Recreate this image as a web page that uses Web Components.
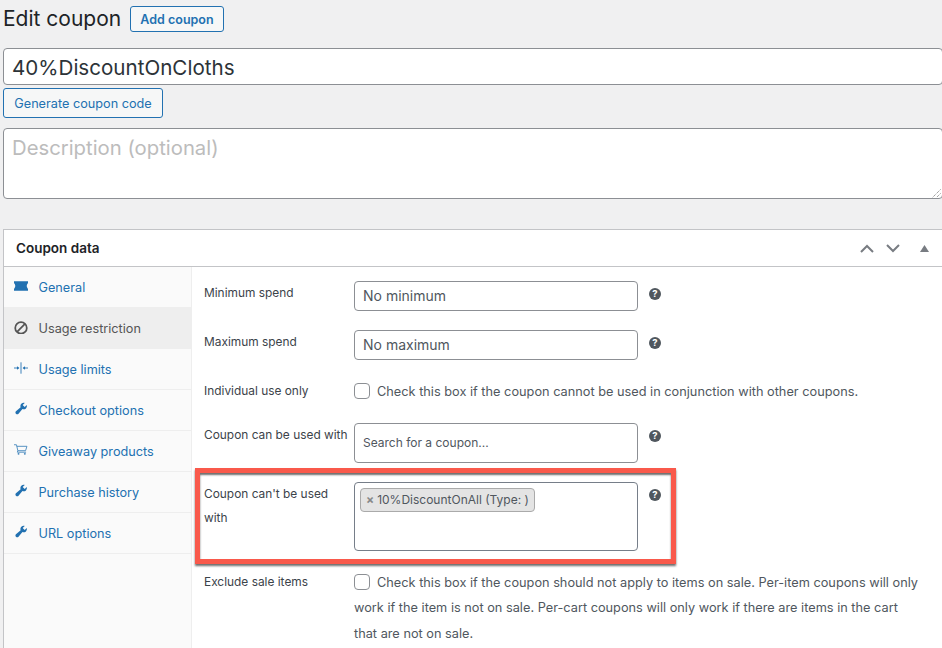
<!DOCTYPE html>
<html>
<head>
<meta charset="utf-8">
<title>Edit coupon</title>
<style>
    html, body {
        margin: 0;
        height: 648px;
        overflow: hidden;
        background: #f0f0f1;
    }
    body {
        padding-left: 3px;
        font-family: Inter, "Liberation Sans", sans-serif;
        font-size: 13px;
        color: #3c434a;
    }
</style>
</head>
<body>
<coupon-head>Edit coupon</coupon-head>
<text-box size="large">40%DiscountOnCloths</text-box>
<wp-button class="gen">Generate coupon code</wp-button>
<text-box size="area" placeholder>Description (optional)</text-box>
<coupon-panel>
    <panel-tab icon="ticket">General</panel-tab>
    <panel-tab icon="ban" active>Usage restriction</panel-tab>
    <panel-tab icon="limits">Usage limits</panel-tab>
    <panel-tab icon="wrench">Checkout options</panel-tab>
    <panel-tab icon="cart">Giveaway products</panel-tab>
    <panel-tab icon="wrench">Purchase history</panel-tab>
    <panel-tab icon="wrench">URL options</panel-tab>

    <form-row slot="rows" style="--top:14px" label="Minimum spend" help>
        <text-box size="field">No minimum</text-box>
    </form-row>
    <form-row slot="rows" style="--top:19px" label="Maximum spend" help>
        <text-box size="field">No maximum</text-box>
    </form-row>
    <form-row slot="rows" style="--top:24px;--label-top:-5px" label="Individual use only">
        <check-text>Check this box if the coupon cannot be used in conjunction with other coupons.</check-text>
    </form-row>
    <form-row slot="rows" style="--top:18px" label="Coupon can be used with" help>
        <text-box size="search">Search for a coupon...</text-box>
    </form-row>
    <form-row slot="rows" class="marked" style="--top:19px" label="Coupon can't be used with" help>
        <chip-box><coupon-chip>10%DiscountOnAll (Type: )</coupon-chip></chip-box>
    </form-row>
    <form-row slot="rows" style="--top:24px;--label-top:-5px" label="Exclude sale items">
        <check-text>Check this box if the coupon should not apply to items on sale. Per-item coupons will only work if the item is not on sale. Per-cart coupons will only work if there are items in the cart that are not on sale.</check-text>
    </form-row>
</coupon-panel>

<script>
const ICONS = {
    ticket: '<path d="M0 2.5h16v2.2Q13 8 16 11.3v2.2H0v-2.2Q3 8 0 4.7z" fill="currentColor"/>',
    ban: '<circle cx="8" cy="9" r="6.6" fill="none" stroke="currentColor" stroke-width="2"/><path d="M3.5 13.5l9-9" stroke="currentColor" stroke-width="2"/>',
    limits: '<path d="M8 1.5v13M0 8h5M11 8h5" stroke="currentColor" stroke-width="1" fill="none"/><path d="M3.4 6L6.2 8l-2.8 2zM12.6 6L9.8 8l2.8 2z" fill="currentColor"/>',
    wrench: '<g transform="translate(0 -.7) scale(.82)"><path fill="currentColor" d="M16.68 9.77c-1.34 1.34-3.3 1.67-4.95.99l-5.41 6.52c-.99.99-2.59.99-3.58 0s-.99-2.59 0-3.57l6.52-5.42c-.68-1.65-.35-3.61.99-4.95 1.28-1.28 3.12-1.62 4.72-1.06l-2.89 2.89 2.82 2.82 2.86-2.87c.53 1.58.18 3.39-1.08 4.67z"/></g>',
    cart: '<g opacity=".85"><path d="M0 2h2.8l1.6 6.8h8.8l1.6-5H3.3M4.4 8.8l-.6 1.7h10" fill="none" stroke="currentColor" stroke-width="1"/><circle cx="5.2" cy="12.4" r="1.1" fill="currentColor"/><circle cx="12.4" cy="12.4" r="1.1" fill="currentColor"/></g>'
};

class CouponHead extends HTMLElement {
    connectedCallback() {
        this.attachShadow({ mode: 'open' });
        this.shadowRoot.innerHTML = `
            <style>
                :host {
                    display: flex;
                    align-items: center;
                    height: 26px;
                    padding: 6px 0 16px;
                    gap: 10px;
                }
                h1 {
                    margin: 0;
                    width: 117px;
                    white-space: nowrap;
                    font-size: 21px;
                    font-weight: 400;
                    color: #1d2327;
                    line-height: 26px;
                }
            </style>
            <h1><slot></slot></h1>
            <wp-button strong>Add coupon</wp-button>
        `;
    }
}

class WpButton extends HTMLElement {
    connectedCallback() {
        this.attachShadow({ mode: 'open' });
        const strong = this.hasAttribute('strong');
        this.shadowRoot.innerHTML = `
            <style>
                :host {
                    display: ${strong ? 'inline-flex' : 'flex'};
                    width: ${strong ? '94px' : '160px'};
                    height: ${strong ? '26px' : '30px'};
                    margin-top: ${strong ? '0' : '3px'};
                    box-sizing: border-box;
                    align-items: center;
                    justify-content: center;
                    border: 1px solid #2271b1;
                    border-radius: 3px;
                    background: #f6f7f7;
                    color: #2271b1;
                    font-size: ${strong ? '12.5px' : '12.7px'};
                    font-weight: ${strong ? '600' : '400'};
                }
            </style>
            <slot></slot>
        `;
    }
}

class TextBox extends HTMLElement {
    connectedCallback() {
        this.attachShadow({ mode: 'open' });
        const size = this.getAttribute('size');
        const sizes = {
            large: 'height:37px;font-size:20.6px;color:#2c3338;padding:2px 0 0 8px;width:940px;',
            area: 'height:71px;margin-top:10px;font-size:20.3px;color:#bcbcbc;padding-left:8px;width:940px;align-items:flex-start;padding-top:6px;',
            field: 'height:30px;font-size:14px;color:#50575e;padding:0 0 2px 8px;width:284px;',
            search: 'height:40px;font-size:12px;color:#50575e;padding:0 0 1px 8px;width:284px;'
        };
        this.shadowRoot.innerHTML = `
            <style>
                :host {
                    display: flex;
                    box-sizing: border-box;
                    position: relative;
                    align-items: center;
                    background: #fff;
                    border: 1px solid #8c8f94;
                    border-radius: 4px;
                    ${sizes[size]}
                }
                svg {
                    position: absolute;
                    right: 1px;
                    bottom: 0;
                }
            </style>
            <slot></slot>
            ${size === 'area' ? '<svg width="9" height="9" viewBox="0 0 9 9"><path d="M8.5 .5l-8 8M8.5 4.5l-4 4" stroke="#777" stroke-width="1" stroke-dasharray="1 1" fill="none"/></svg>' : ''}
        `;
    }
}

class CouponPanel extends HTMLElement {
    connectedCallback() {
        this.attachShadow({ mode: 'open' });
        this.shadowRoot.innerHTML = `
            <style>
                :host {
                    display: block;
                    width: 950px;
                    margin-top: 30px;
                    box-sizing: border-box;
                    background: #fff;
                    border: 1px solid #c3c4c7;
                }
                header {
                    display: flex;
                    align-items: center;
                    height: 36px;
                    padding-left: 12px;
                    border-bottom: 1px solid #c3c4c7;
                    font-size: 13.5px;
                    font-weight: 600;
                    color: #1d2327;
                }
                .title { flex: 1; }
                .arrows {
                    display: flex;
                    align-items: center;
                    gap: 12px;
                    margin-right: 23px;
                    color: #787c82;
                }
                .arrows svg { display: block; }
                .body {
                    display: grid;
                    grid-template-columns: 188px 1fr;
                    height: 400px;
                }
                nav {
                    background: #fafafa;
                    border-right: 1px solid #eee;
                }
            </style>
            <header>
                <span class="title">Coupon data</span>
                <span class="arrows">
                    <svg width="14" height="9" viewBox="0 0 14 9"><path d="M1 8l6-6 6 6" fill="none" stroke="currentColor" stroke-width="2"/></svg>
                    <svg width="14" height="9" viewBox="0 0 14 9"><path d="M1 1l6 6 6-6" fill="none" stroke="currentColor" stroke-width="2"/></svg>
                    <svg style="margin-left:8px" width="9" height="7" viewBox="0 0 9 7"><path d="M4.5 0L9 7H0z" fill="currentColor"/></svg>
                </span>
            </header>
            <div class="body">
                <nav><slot></slot></nav>
                <main><slot name="rows"></slot></main>
            </div>
        `;
    }
}

class PanelTab extends HTMLElement {
    connectedCallback() {
        this.attachShadow({ mode: 'open' });
        const active = this.hasAttribute('active');
        this.shadowRoot.innerHTML = `
            <style>
                :host {
                    display: flex;
                    align-items: center;
                    box-sizing: border-box;
                    height: 41px;
                    padding-left: 10px;
                    gap: 10.5px;
                    border-bottom: 1px solid #eee;
                    color: ${active ? '#555' : '#2271b1'};
                    background: ${active ? '#eee' : 'transparent'};
                    font-size: 12.7px;
                }
                svg { flex: none; margin-top: -2px; }
            </style>
            <svg width="14" height="14" viewBox="0 0 16 16">${ICONS[this.getAttribute('icon')]}</svg>
            <slot></slot>
        `;
    }
}

class FormRow extends HTMLElement {
    connectedCallback() {
        this.attachShadow({ mode: 'open' });
        const help = this.hasAttribute('help');
        const marked = this.classList.contains('marked');
        this.shadowRoot.innerHTML = `
            <style>
                :host {
                    display: grid;
                    position: relative;
                    grid-template-columns: 150px 284px 34px;
                    margin-top: var(--top, 0);
                    padding-left: 12px;
                    align-items: start;
                }
                label {
                    font-size: 11.9px;
                    line-height: 24px;
                    color: #3c434a;
                    margin-top: var(--label-top, 0);
                }
                .help {
                    display: block;
                    margin: 7px 0 0 11px;
                }
                .mark {
                    position: absolute;
                    left: 3px;
                    top: -14px;
                    width: 481px;
                    height: 96px;
                    box-sizing: border-box;
                    border: 5px solid #f9594b;
                    box-shadow: 0 2px 2px rgba(60,60,60,.75), inset 0 2px 2px rgba(60,60,60,.75);
                    pointer-events: none;
                }
            </style>
            <label>${this.getAttribute('label')}</label>
            <div class="field"><slot></slot></div>
            ${help ? `<svg class="help" width="12" height="12" viewBox="0 0 12 12"><circle cx="6" cy="6" r="6" fill="#50575e"/><text x="6" y="9.4" text-anchor="middle" font-size="9.5" font-weight="700" font-family="Inter" fill="#fff">?</text></svg>` : ''}
            ${marked ? '<div class="mark"></div>' : ''}
        `;
    }
}

class CheckText extends HTMLElement {
    connectedCallback() {
        this.attachShadow({ mode: 'open' });
        this.shadowRoot.innerHTML = `
            <style>
                :host {
                    display: block;
                    width: 568px;
                    font-size: 12.75px;
                    line-height: 25.5px;
                    color: #50575e;
                    margin-top: -5px;
                }
                i {
                    display: inline-block;
                    box-sizing: border-box;
                    width: 16px;
                    height: 16px;
                    margin-right: 7px;
                    vertical-align: -3px;
                    background: #fff;
                    border: 1px solid #8c8f94;
                    border-radius: 4px;
                }
            </style>
            <i></i><slot></slot>
        `;
    }
}

class ChipBox extends HTMLElement {
    connectedCallback() {
        this.attachShadow({ mode: 'open' });
        this.shadowRoot.innerHTML = `
            <style>
                :host {
                    display: block;
                    box-sizing: border-box;
                    width: 284px;
                    height: 69px;
                    padding: 5px;
                    background: #fff;
                    border: 1px solid #767e89;
                    border-radius: 4px;
                }
            </style>
            <slot></slot>
        `;
    }
}

class CouponChip extends HTMLElement {
    connectedCallback() {
        this.attachShadow({ mode: 'open' });
        this.shadowRoot.innerHTML = `
            <style>
                :host {
                    display: inline-flex;
                    align-items: center;
                    box-sizing: border-box;
                    height: 24px;
                    width: 175px;
                    padding-left: 5px;
                    gap: 3px;
                    background: #e4e4e4;
                    border: 1px solid #aaa;
                    border-radius: 4px;
                    font-size: 12px;
                    color: #50575e;
                }
                b { color: #888; font-size: 12px; }
            </style>
            <b>×</b><slot></slot>
        `;
    }
}

customElements.define('coupon-head', CouponHead);
customElements.define('wp-button', WpButton);
customElements.define('text-box', TextBox);
customElements.define('coupon-panel', CouponPanel);
customElements.define('panel-tab', PanelTab);
customElements.define('form-row', FormRow);
customElements.define('check-text', CheckText);
customElements.define('chip-box', ChipBox);
customElements.define('coupon-chip', CouponChip);
</script>
</body>
</html>
